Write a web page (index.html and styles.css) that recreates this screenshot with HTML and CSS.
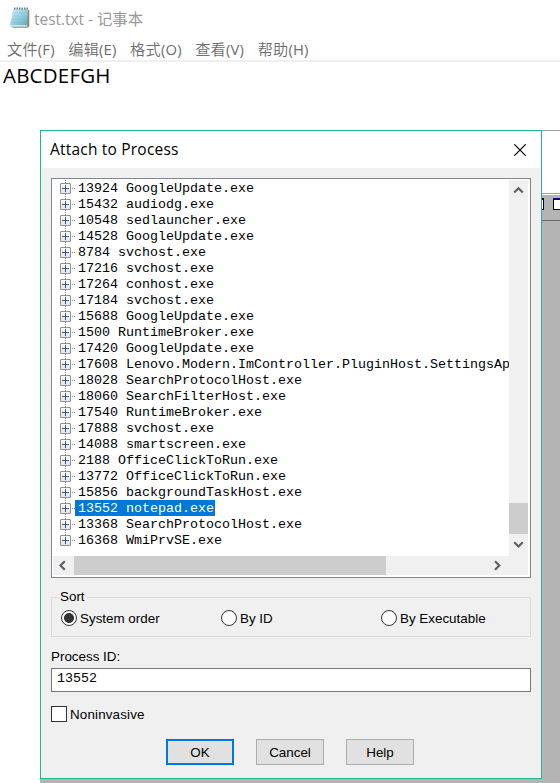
FILE: index.html
```
<!DOCTYPE html>
<html lang="zh-CN">
<head>
<meta charset="utf-8">
<title>test.txt - 记事本</title>
<link rel="stylesheet" href="styles.css">
</head>
<body>
<main class="notepad">
  <header class="caption">
    <svg class="note-icon" width="21" height="22" viewBox="0 0 21 22">
      <defs><linearGradient id="paper" x1="0" y1="0" x2="1" y2="1"><stop offset="0" stop-color="#d5f2f7"/><stop offset=".5" stop-color="#94d0df"/><stop offset="1" stop-color="#56aabf"/></linearGradient></defs>
      <path d="M19 3h1.3v16.5l-2 1.2H4l-2-1.5z" fill="#9b8766"/>
      <path d="M4 2h15l-1 17.5H.7z" fill="url(#paper)"/>
      <path d="M.7 18.2h17.5v1.2H.5z" fill="#e6f5f7"/>
      <path d="M5 6h12M4.4 9h12M3.7 12h12M3 15h12" stroke="#6fb9cb" stroke-width=".4"/>
      <path d="M5 1.5h14" stroke="#6f8388" stroke-width="1.8" stroke-dasharray="1.5 1"/>
    </svg>
    <span class="caption-text">test.txt - 记事本</span>
  </header>
  <nav class="menu"><span><b>文件</b>(F)</span><span><b>编辑</b>(E)</span><span><b>格式</b>(O)</span><span><b>查看</b>(V)</span><span><b>帮助</b>(H)</span></nav>
  <div class="document">ABCDEFGH</div>
</main>

<div class="backdrop">
  <div class="back-head"></div>
  <div class="back-tools"><i class="tool-end"></i><i class="tool"></i></div>
</div>

<section class="dialog">
  <header class="titlebar">
    <h1>Attach to Process</h1>
    <svg width="12" height="12" viewBox="0 0 12 12"><path d="M.3.3l11.4 11.4M11.7.3L.3 11.7" stroke="#000" stroke-width="1.2"/></svg>
  </header>
  <div class="content">
    <div class="tree">
      <ul class="processes">
        <li><i></i><span>13924 GoogleUpdate.exe</span></li>
        <li><i></i><span>15432 audiodg.exe</span></li>
        <li><i></i><span>10548 sedlauncher.exe</span></li>
        <li><i></i><span>14528 GoogleUpdate.exe</span></li>
        <li><i></i><span>8784 svchost.exe</span></li>
        <li><i></i><span>17216 svchost.exe</span></li>
        <li><i></i><span>17264 conhost.exe</span></li>
        <li><i></i><span>17184 svchost.exe</span></li>
        <li><i></i><span>15688 GoogleUpdate.exe</span></li>
        <li><i></i><span>1500 RuntimeBroker.exe</span></li>
        <li><i></i><span>17420 GoogleUpdate.exe</span></li>
        <li><i></i><span>17608 Lenovo.Modern.ImController.PluginHost.SettingsAp</span></li>
        <li><i></i><span>18028 SearchProtocolHost.exe</span></li>
        <li><i></i><span>18060 SearchFilterHost.exe</span></li>
        <li><i></i><span>17540 RuntimeBroker.exe</span></li>
        <li><i></i><span>17888 svchost.exe</span></li>
        <li><i></i><span>14088 smartscreen.exe</span></li>
        <li><i></i><span>2188 OfficeClickToRun.exe</span></li>
        <li><i></i><span>13772 OfficeClickToRun.exe</span></li>
        <li><i></i><span>15856 backgroundTaskHost.exe</span></li>
        <li><i></i><span class="selected">13552 notepad.exe</span></li>
        <li><i></i><span>13368 SearchProtocolHost.exe</span></li>
        <li><i></i><span>16368 WmiPrvSE.exe</span></li>
      </ul>
      <div class="vscroll">
        <svg width="19" height="19" viewBox="0 0 19 19"><path d="M5.2 12.5l4.3-4.3 4.3 4.3" /></svg>
        <div class="thumb"></div>
        <svg width="19" height="19" viewBox="0 0 19 19"><path d="M5.2 7.2l4.3 4.3 4.3-4.3" /></svg>
      </div>
      <div class="hscroll">
        <svg width="21" height="19" viewBox="0 0 21 19"><path d="M11.8 5.2L7.5 9.5l4.3 4.3" /></svg>
        <div class="thumb"></div>
        <svg width="21" height="19" viewBox="0 0 21 19"><path d="M8 5.2l4.3 4.3L8 13.8" /></svg>
      </div>
    </div>

    <fieldset class="sort">
      <legend>Sort</legend>
      <label><i class="radio checked"></i>System order</label>
      <label><i class="radio"></i>By ID</label>
      <label><i class="radio"></i>By Executable</label>
    </fieldset>

    <div class="field-label">Process ID:</div>
    <div class="field">13552</div>
    <label class="check"><i></i>Noninvasive</label>
    <footer class="buttons"><button class="default">OK</button><button>Cancel</button><button>Help</button></footer>
  </div>
</section>
</body>
</html>
```
FILE: styles.css
```
* { box-sizing: border-box; }
body {
  margin: 0;
  width: 560px;
  height: 783px;
  position: relative;
  overflow: hidden;
  background: #fff;
  color: #000;
  font-family: "Liberation Sans", sans-serif;
  font-size: 13.4px;
}
svg { display: block; flex: none; }

.caption {
  display: flex;
  align-items: center;
  height: 38px;
  padding-left: 9px;
  gap: 4px;
  color: #999;
  font: 15.4px "Open Sans", "Noto Sans CJK SC", sans-serif;
}
.note-icon { margin-bottom: 2px; }
.caption-text { white-space: nowrap; margin-top: -2px; }
.menu {
  display: flex;
  gap: 13.5px;
  height: 24px;
  padding-left: 7px;
  border-bottom: 2px solid #f0f0f0;
  color: #6d6d6d;
  font: 14.8px/23px "Open Sans", "Noto Sans CJK SC", sans-serif;
  letter-spacing: 0.2px;
  white-space: nowrap;
}
.menu b { font-weight: 350; font-size: 15.2px; }
.document {
  padding-left: 3px;
  font: 20.5px/27px "Open Sans", sans-serif;
  letter-spacing: 0.2px;
}

.backdrop {
  position: absolute;
  left: 40px;
  top: 130px;
  width: 520px;
  height: 653px;
  background: #b4b4b4;
}
.back-head {
  height: 64px;
  background: #fff;
  border-top: 1px solid #a0a0a0;
  border-bottom: 1px solid #a0a0a0;
}
.back-tools {
  display: flex;
  gap: 9px;
  height: 27px;
  padding: 3px 0 0 500px;
  border-top: 1px solid #fff;
  border-bottom: 1px solid #696969;
  overflow: hidden;
}
.back-tools i {
  flex: none;
  height: 12px;
  background: #fff;
  border: 1px solid #000;
  border-top: 2px solid #000080;
}
.back-tools .tool-end { width: 4px; border-left: 0; }
.back-tools .tool { width: 12px; }

.dialog {
  position: absolute;
  left: 40px;
  top: 130px;
  width: 502px;
  height: 649px;
  background: #f0f0f0;
  border: 1px solid #1db69c;
}
.titlebar {
  display: flex;
  align-items: center;
  justify-content: space-between;
  height: 37px;
  padding: 0 15px 0 9px;
  background: #fff;
}
.titlebar h1 {
  margin: 0;
  font: 15.5px/37px "Open Sans", sans-serif;
  letter-spacing: 0.2px;
}
.content { padding: 10px; }

.tree {
  display: grid;
  grid-template: 376px 20px / 456px 20px;
  width: 480px;
  height: 400px;
  padding: 1px;
  border: 1px solid #828790;
  background: #fff;
}
.processes {
  margin: 0;
  padding: 0 0 0 7px;
  list-style: none;
  overflow: hidden;
  font: 13.333px/18px "Liberation Mono", monospace;
  white-space: nowrap;
}
.processes li {
  display: flex;
  align-items: center;
  height: 16px;
  background:
    repeating-linear-gradient(#888 0 1px, transparent 1px 2px) 5px 0 / 1px 16px no-repeat,
    repeating-linear-gradient(90deg, #888 0 1px, transparent 1px 2px) 12px 8px / 3px 1px no-repeat;
}
.processes li:last-child {
  background:
    repeating-linear-gradient(#888 0 1px, transparent 1px 2px) 5px 0 / 1px 8px no-repeat,
    repeating-linear-gradient(90deg, #888 0 1px, transparent 1px 2px) 12px 8px / 3px 1px no-repeat;
}
.processes i {
  flex: none;
  width: 11px;
  height: 11px;
  margin: 1px 4px 0 0;
  border: 1px solid #919191;
  border-radius: 1px;
  background:
    linear-gradient(#3553a0, #3553a0) center / 7px 1px no-repeat,
    linear-gradient(#3553a0, #3553a0) center / 1px 7px no-repeat,
    linear-gradient(#fff, #e4e4e4);
}
.processes span { height: 16px; padding: 0 1px 0 3px; }
.processes .selected { background: #0078d7; color: #fff; }
.vscroll, .hscroll { background: #f0f0f0; display: flex; }
.vscroll { width: 19px; flex-direction: column; justify-content: space-between; padding-bottom: 2px; }
.vscroll .thumb { width: 19px; height: 31px; margin-top: 304px; margin-bottom: 1px; background: #cdcdcd; }
.hscroll { grid-column: 1 / 3; width: 475px; height: 19px; padding-right: 20px; }
.hscroll .thumb { width: 312px; height: 19px; margin-right: auto; background: #cdcdcd; }
.tree svg path { fill: none; stroke: #606060; stroke-width: 2.2; }

.sort {
  display: flex;
  width: 480px;
  height: 47px;
  margin: 12px 0 0;
  padding: 6px 0 0 9px;
  border: 1px solid #dcdcdc;
  min-width: 0;
}
.sort legend { height: 14px; line-height: 14px; padding: 0 2px; margin-left: -3px; }
.sort label { flex: none; display: flex; align-items: center; gap: 3px; width: 160px; height: 16px; }
.sort label:last-child { width: 140px; }
.radio {
  width: 16px;
  height: 16px;
  border: 1px solid #333;
  border-radius: 50%;
  background: #fff;
}
.radio.checked { background: radial-gradient(circle, #333 0 4.6px, #fff 5.3px); }
.field-label { margin-top: 11px; line-height: 18px; }
.field {
  width: 480px;
  height: 24px;
  margin-top: 2px;
  padding: 1px 5px;
  border: 1px solid #7a7a7a;
  background: #fff;
  font: 13.333px/18px "Liberation Mono", monospace;
}
.check { display: flex; align-items: center; gap: 3px; height: 16px; margin-top: 14px; letter-spacing: 0.15px; }
.check i { width: 16px; height: 16px; border: 1px solid #333; background: #fff; }
.buttons { display: flex; gap: 22px; padding: 17px 0 0 115px; }
.buttons button {
  width: 68px;
  height: 26px;
  padding: 0;
  border: 1px solid #adadad;
  background: #e1e1e1;
  color: #000;
  font: inherit;
}
.buttons .default { border: 2px solid #0078d7; }
```
